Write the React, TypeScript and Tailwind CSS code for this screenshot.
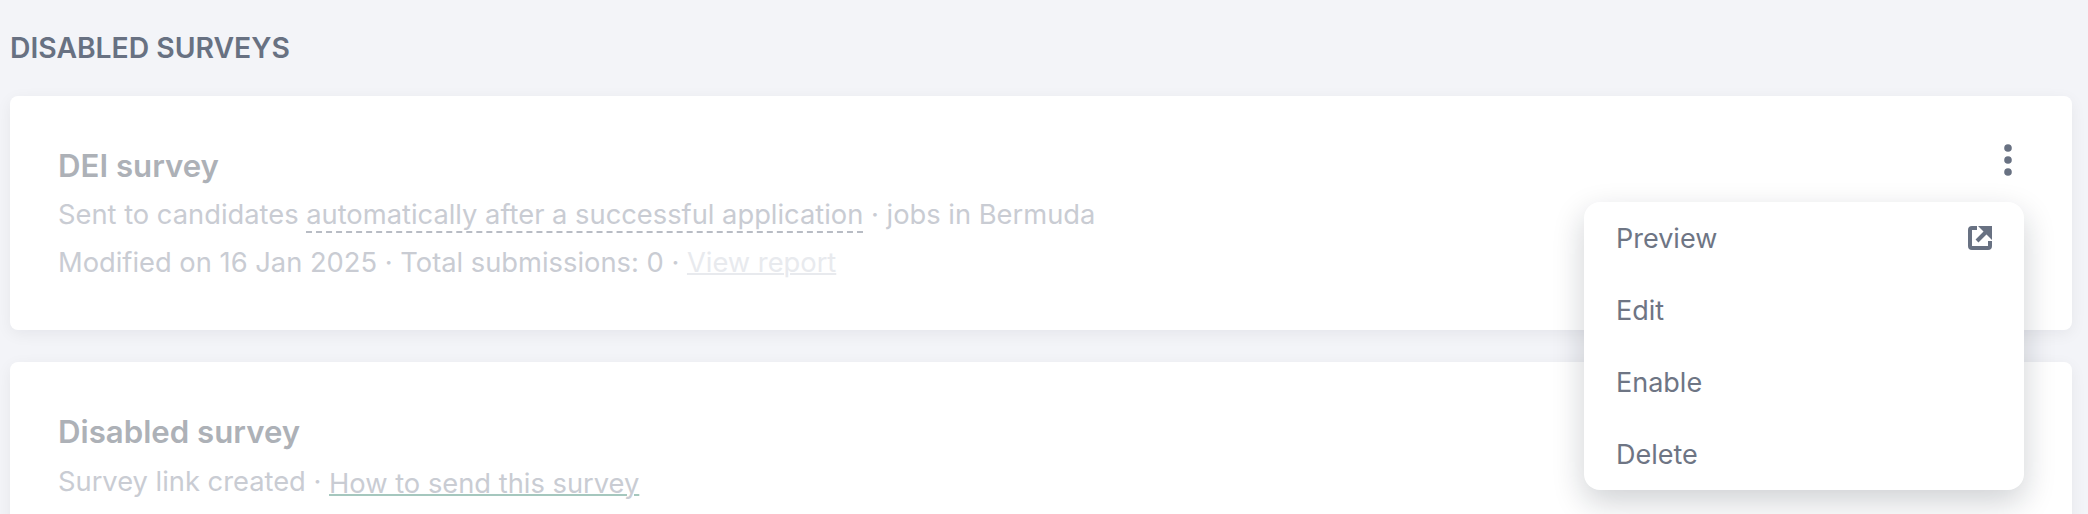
export default function App() {
  return (
    <div className="h-[514px] overflow-hidden bg-[#f3f4f8] px-[10px] pt-[32px] font-['Inter',sans-serif]">
      <h2 className="mb-[32px] h-[32px] text-[28.3px] leading-[32px] font-semibold text-[#687182]">DISABLED SURVEYS</h2>

      {/* First card */}
      <div className="relative mb-[32px] flex h-[234px] w-[2062px] justify-between rounded-[8px] bg-white pt-[48px] pr-[60px] pl-[48px] shadow-[0_4px_16px_rgba(16,24,40,0.06)]">
        <div>
          <p className="h-[44px] text-[31.2px] leading-[44px] font-semibold text-[#adb1b7]">DEI survey</p>
          <p className="h-[48px] pt-[3px] text-[27.3px] leading-[48px] text-[#c9ccd3]">
            Sent to candidates{" "}
            <span className="border-b-2 border-dashed border-[#b8bcc4]">automatically after a successful application</span>
            {" "}· jobs in Bermuda
          </p>
          <p className="h-[48px] pt-[3px] text-[27.3px] leading-[48px] text-[#c9ccd3]">
            Modified on 16 Jan 2025 · Total submissions: 0 ·{" "}
            <span className="text-[#e8eaee] underline decoration-[#e8eaee] decoration-2">View report</span>
          </p>
        </div>
        <svg width="8" height="32" viewBox="0 0 8 32" className="shrink-0 fill-[#687182]">
          <circle cx="4" cy="4" r="3.8" />
          <circle cx="4" cy="16" r="3.8" />
          <circle cx="4" cy="28" r="3.8" />
        </svg>

        {/* Dropdown */}
        <div className="absolute top-[106px] right-[48px] z-10 w-[440px] rounded-[16px] bg-white text-[27px] text-[#6e7584] shadow-[0_12px_32px_rgba(16,24,40,0.2)]">
          <div className="flex h-[72px] items-center justify-between px-[32px]">
            <span className="pt-[2px]">Preview</span>
            <svg width="24" height="24" viewBox="0 0 24 24" fill="none" stroke="#687182" strokeWidth="4">
              <path d="M9 2H4C2.9 2 2 2.9 2 4V20C2 21.1 2.9 22 4 22H20C21.1 22 22 21.1 22 20V15" />
              <path d="M9 15L19 5" />
              <path d="M10 0H24V14Z" fill="#687182" stroke="none" />
            </svg>
          </div>
          <div className="flex h-[72px] items-center px-[32px] pt-[2px]">Edit</div>
          <div className="flex h-[72px] items-center px-[32px] pt-[2px]">Enable</div>
          <div className="flex h-[72px] items-center px-[32px] pt-[2px]">Delete</div>
        </div>
      </div>

      {/* Second card */}
      <div className="h-[234px] w-[2062px] rounded-[8px] bg-white pt-[48px] pl-[48px] shadow-[0_4px_16px_rgba(16,24,40,0.06)]">
        <p className="h-[44px] text-[31.2px] leading-[44px] font-semibold text-[#adb1b7]">Disabled survey</p>
        <p className="h-[48px] pt-[4px] text-[27.3px] leading-[48px] text-[#c9ccd3]">
          Survey link created ·{" "}
          <span className="relative top-[2px] underline decoration-[#a5c7be] decoration-2">How to send this survey</span>
        </p>
      </div>
    </div>
  );
}
